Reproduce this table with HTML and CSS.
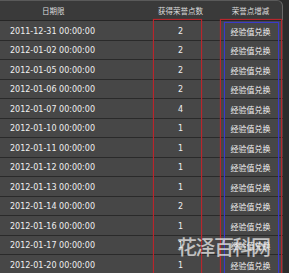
FILE: index.html
```html
<!DOCTYPE html>
<html lang="zh-CN">
<head>
    <meta charset="UTF-8">
    <title>荣誉点记录</title>
    <link rel="stylesheet" href="styles.css">
</head>
<body>
    <div class="panel">
        <div class="head">
            <div class="cell date">日期限</div>
            <div class="cell num">获得荣誉点数</div>
            <div class="cell kind">荣誉点增减</div>
        </div>
        <div class="row"><div class="cell date">2011-12-31 00:00:00</div><div class="cell num">2</div><div class="cell kind">经验值兑换</div></div>
        <div class="row"><div class="cell date">2012-01-02 00:00:00</div><div class="cell num">2</div><div class="cell kind">经验值兑换</div></div>
        <div class="row"><div class="cell date">2012-01-05 00:00:00</div><div class="cell num">2</div><div class="cell kind">经验值兑换</div></div>
        <div class="row"><div class="cell date">2012-01-06 00:00:00</div><div class="cell num">2</div><div class="cell kind">经验值兑换</div></div>
        <div class="row"><div class="cell date">2012-01-07 00:00:00</div><div class="cell num">4</div><div class="cell kind">经验值兑换</div></div>
        <div class="row"><div class="cell date">2012-01-10 00:00:00</div><div class="cell num">1</div><div class="cell kind">经验值兑换</div></div>
        <div class="row"><div class="cell date">2012-01-11 00:00:00</div><div class="cell num">1</div><div class="cell kind">经验值兑换</div></div>
        <div class="row"><div class="cell date">2012-01-12 00:00:00</div><div class="cell num">1</div><div class="cell kind">经验值兑换</div></div>
        <div class="row"><div class="cell date">2012-01-13 00:00:00</div><div class="cell num">1</div><div class="cell kind">经验值兑换</div></div>
        <div class="row"><div class="cell date">2012-01-14 00:00:00</div><div class="cell num">2</div><div class="cell kind">经验值兑换</div></div>
        <div class="row"><div class="cell date">2012-01-16 00:00:00</div><div class="cell num">1</div><div class="cell kind">经验值兑换</div></div>
        <div class="row"><div class="cell date">2012-01-17 00:00:00</div><div class="cell num">1</div><div class="cell kind">经验值兑换</div></div>
        <div class="row"><div class="cell date">2012-01-20 00:00:00</div><div class="cell num">1</div><div class="cell kind">经验值兑换</div></div>

        <!-- marker boxes drawn over the columns -->
        <div class="mark mark-num"></div>
        <div class="mark mark-kind"></div>
        <div class="mark mark-kind-inner"></div>
    </div>
    <div class="watermark">花泽百科网</div>
</body>
</html>
```

FILE: styles.css
```css
body {
    margin: 0;
    background-color: #2c2c2c;
    font-family: "DejaVu Sans", "Noto Sans CJK SC", sans-serif;
    overflow: hidden;
    position: relative;
    width: 289px;
    height: 273px;
}
.panel {
    position: relative;
    width: 283px;
}
.head {
    display: flex;
    height: 21px;
    background-color: #3a3a3a;
    border-top: 1px solid #5a5a5a;
    border-right: 1px solid #6a6a6a;
    border-top-right-radius: 6px;
    border-bottom: 1px solid #262626;
    box-sizing: border-box;
    align-items: center;
    color: #dcdcdc;
    font-size: 7.5px;
}
.row {
    display: flex;
    height: 19.5px;
    background-color: #474747;
    border-bottom: 1px solid #2a2a2a;
    box-sizing: border-box;
    align-items: center;
    color: #f0f0f0;
    font-size: 8px;
    padding-top: 2px;
}
.cell {
    white-space: nowrap;
}
.date {
    width: 143px;
    padding-left: 10px;
    box-sizing: border-box;
}
.head .date {
    padding-left: 42px;
}
.num {
    width: 77px;
    text-align: center;
    padding-right: 2px;
    box-sizing: border-box;
}
.kind {
    width: 61px;
    text-align: center;
}
.mark {
    position: absolute;
    top: 19px;
    bottom: -10px;
    border: 1px solid #b8262c;
    box-shadow: 0 0 1px rgba(184, 38, 44, 0.8);
}
.mark-num {
    left: 153px;
    width: 47px;
}
.mark-kind {
    left: 220px;
    width: 60px;
}
.mark-kind-inner {
    top: 22px;
    left: 224px;
    width: 53px;
    border-color: #3a3ac8;
    box-shadow: 0 0 1px rgba(58, 58, 200, 0.8);
}
.watermark {
    position: absolute;
    left: 177px;
    top: 232px;
    font-family: "Noto Sans CJK SC", sans-serif;
    font-size: 20px;
    font-weight: 500;
    letter-spacing: -1.5px;
    color: rgba(235, 235, 235, 0.75);
}
```
